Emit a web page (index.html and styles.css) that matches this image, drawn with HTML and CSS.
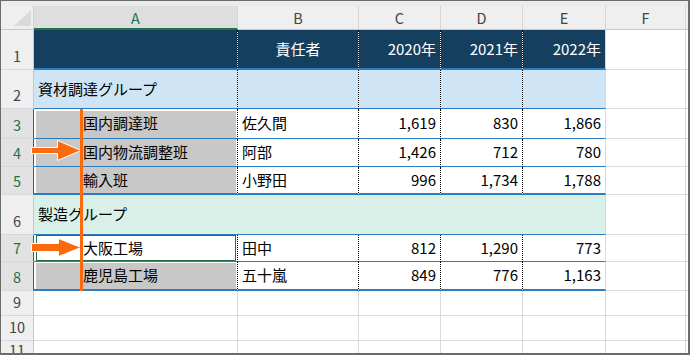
FILE: index.html
```html
<!DOCTYPE html>
<html lang="ja">
<head>
<meta charset="utf-8">
<link rel="stylesheet" href="styles.css">
</head>
<body>
<div class="win">
  <div class="topbar"></div>
  <div class="sheet">
    <div class="row r-hdr">
      <div class="corner"><svg width="32" height="23" viewBox="0 0 32 23"><polygon points="13,20 30,20 30,4" fill="#dadada"/></svg></div>
      <div class="ch sel">A</div>
      <div class="ch">B</div>
      <div class="ch">C</div>
      <div class="ch">D</div>
      <div class="ch">E</div>
      <div class="ch">F</div>
      <div class="ch g"></div>
    </div>

    <div class="row r1">
      <div class="rh">1</div>
      <div class="c t head"></div>
      <div class="c t head ctr">責任者</div>
      <div class="c t head num">2020年</div>
      <div class="c t head num">2021年</div>
      <div class="c t head num e">2022年</div>
      <div class="c"></div>
      <div class="c g"></div>
    </div>

    <div class="row r2">
      <div class="rh">2</div>
      <div class="c t blue">資材調達グループ</div>
      <div class="c t blue"></div>
      <div class="c t blue"></div>
      <div class="c t blue"></div>
      <div class="c t blue e"></div>
      <div class="c"></div>
      <div class="c g"></div>
    </div>

    <div class="row r3">
      <div class="rh sel">3</div>
      <div class="c t ind selc first">国内調達班</div>
      <div class="c t">佐久間</div>
      <div class="c t num">1,619</div>
      <div class="c t num">830</div>
      <div class="c t num e">1,866</div>
      <div class="c"></div>
      <div class="c g"></div>
    </div>

    <div class="row r4">
      <div class="rh sel">4</div>
      <div class="c t ind selc">国内物流調整班</div>
      <div class="c t">阿部</div>
      <div class="c t num">1,426</div>
      <div class="c t num">712</div>
      <div class="c t num e">780</div>
      <div class="c"></div>
      <div class="c g"></div>
    </div>

    <div class="row r5">
      <div class="rh sel">5</div>
      <div class="c t ind selc thick">輸入班</div>
      <div class="c t thick">小野田</div>
      <div class="c t num thick">996</div>
      <div class="c t num thick">1,734</div>
      <div class="c t num e thick">1,788</div>
      <div class="c"></div>
      <div class="c g"></div>
    </div>

    <div class="row r6">
      <div class="rh">6</div>
      <div class="c t mint">製造グループ</div>
      <div class="c t mint"></div>
      <div class="c t mint"></div>
      <div class="c t mint"></div>
      <div class="c t mint e"></div>
      <div class="c"></div>
      <div class="c g"></div>
    </div>

    <div class="row r7">
      <div class="rh sel">7</div>
      <div class="c t ind active">大阪工場</div>
      <div class="c t">田中</div>
      <div class="c t num">812</div>
      <div class="c t num">1,290</div>
      <div class="c t num e">773</div>
      <div class="c"></div>
      <div class="c g"></div>
    </div>

    <div class="row r8">
      <div class="rh sel">8</div>
      <div class="c t ind selc first1 thick">鹿児島工場</div>
      <div class="c t thick">五十嵐</div>
      <div class="c t num thick">849</div>
      <div class="c t num thick">776</div>
      <div class="c t num e thick">1,163</div>
      <div class="c"></div>
      <div class="c g"></div>
    </div>

    <div class="row r9">
      <div class="rh">9</div>
      <div class="c"></div><div class="c"></div><div class="c"></div><div class="c"></div><div class="c"></div><div class="c"></div><div class="c g"></div>
    </div>
    <div class="row r10">
      <div class="rh">10</div>
      <div class="c"></div><div class="c"></div><div class="c"></div><div class="c"></div><div class="c"></div><div class="c"></div><div class="c g"></div>
    </div>
    <div class="row r11">
      <div class="rh last">11</div>
      <div class="c"></div><div class="c"></div><div class="c"></div><div class="c"></div><div class="c"></div><div class="c"></div><div class="c g"></div>
    </div>
  </div>

  <svg class="shapes" width="690" height="355" viewBox="0 0 690 355">
    <path d="M31.5 147.5 H57.5 V140.5 L81 150.5 L57.5 160.5 V153.5 H31.5 Z" fill="#fb6a0c" stroke="#ffffff" stroke-width="1"/>
    <path d="M31.5 243.5 H58.5 V238.5 L81 247.5 L58.5 256.5 V251.5 H31.5 Z" fill="#fb6a0c" stroke="#ffffff" stroke-width="1"/>
    <rect x="80" y="109" width="3" height="182" fill="#fb6a0c"/>
  </svg>
</div>
</body>
</html>
```

FILE: styles.css
```css
* {
  box-sizing: border-box;
}

body {
  margin: 0;
  background: #ffffff;
  font-family: "Noto Sans CJK JP", "Noto Sans", sans-serif;
}

.win {
  position: relative;
  width: 690px;
  height: 355px;
  overflow: hidden;
  background: #ffffff;
  border-style: solid;
  border-color: #6b6b6b;
  border-width: 1px 2px 2px 1px;
}

.topbar {
  height: 5px;
  background: #e8ecef;
}

.row {
  display: grid;
  grid-template-columns: 33px 204px 121px 82px 82px 83px 80px 1fr;
  background: #ffffff;
}

.r-hdr { height: 24px; }
.r1 { height: 40px; }
.r2 { height: 39px; }
.r3 { height: 30px; }
.r4 { height: 28px; }
.r5 { height: 28px; }
.r6 { height: 40px; }
.r7 { height: 27px; }
.r8 { height: 29px; }
.r9 { height: 25px; }
.r10 { height: 25px; }
.r11 { height: 12px; }

/* header cells */
.corner {
  background: #efefef;
  border-right: 1px solid #d2d2d2;
  border-bottom: 1px solid #c8c8c8;
  line-height: 0;
}

.ch {
  background: #efefef;
  border-right: 1px solid #d6d6d6;
  border-bottom: 1px solid #c8c8c8;
  display: flex;
  align-items: center;
  justify-content: center;
  font-size: 14.5px;
  color: #444444;
}

.ch.sel {
  background: #dedede;
  color: #217346;
  border-bottom: 2px solid #217346;
}

.ch.g {
  border-right: 0;
}

.rh {
  background: #efefef;
  border-right: 1px solid #c8c8c8;
  border-bottom: 1px solid #d8d8d8;
  display: flex;
  align-items: flex-end;
  justify-content: center;
  padding-bottom: 3px;
  font-size: 14.5px;
  color: #444444;
}

.rh.last {
  align-items: flex-start;
  padding-bottom: 0;
  line-height: 1.2;
}

.rh.sel {
  background: #e2e2e2;
  color: #217346;
  border-right: 1px solid #217346;
}

/* grid cells */
.c {
  position: relative;
  display: flex;
  align-items: center;
  padding: 0 4px 2px;
  font-size: 15px;
  color: #000000;
  white-space: nowrap;
  border-right: 1px solid #dadada;
  border-bottom: 1px solid #dadada;
  background-clip: padding-box;
}

.c.g {
  border-right: 0;
}

.t {
  border-right: 1px dotted #000000;
  border-bottom: 1px solid #2b7cc1;
}

.t.e {
  border-right: 1px solid #dadada;
}

.head {
  background-color: #153f5f;
  color: #ffffff;
  border-bottom-width: 2px;
}

.blue {
  background-color: #cfe5f6;
}

.mint {
  background-color: #d8f0e8;
  border-right: 0;
}

.mint.e {
  border-right: 1px solid #dadada;
}

.thick {
  border-bottom-width: 2px;
}

.num {
  justify-content: flex-end;
}

.ctr {
  justify-content: center;
}

.ind {
  padding-left: 49px;
}

.selc {
  background-color: #c8c8c8;
  box-shadow: inset 2px 0 0 #ffffff, inset -1px 0 0 #ffffff;
}

.selc.first {
  box-shadow: inset 2px 0 0 #ffffff, inset -1px 0 0 #ffffff, inset 0 2px 0 #ffffff;
}

.selc.first1 {
  box-shadow: inset 2px 0 0 #ffffff, inset -1px 0 0 #ffffff, inset 0 1px 0 #ffffff;
}

.active::after {
  content: "";
  position: absolute;
  left: 2px;
  right: 1px;
  top: 0;
  bottom: 0;
  border: 1px solid #217346;
}

.shapes {
  position: absolute;
  left: -1px;
  top: -1px;
  pointer-events: none;
}
```
